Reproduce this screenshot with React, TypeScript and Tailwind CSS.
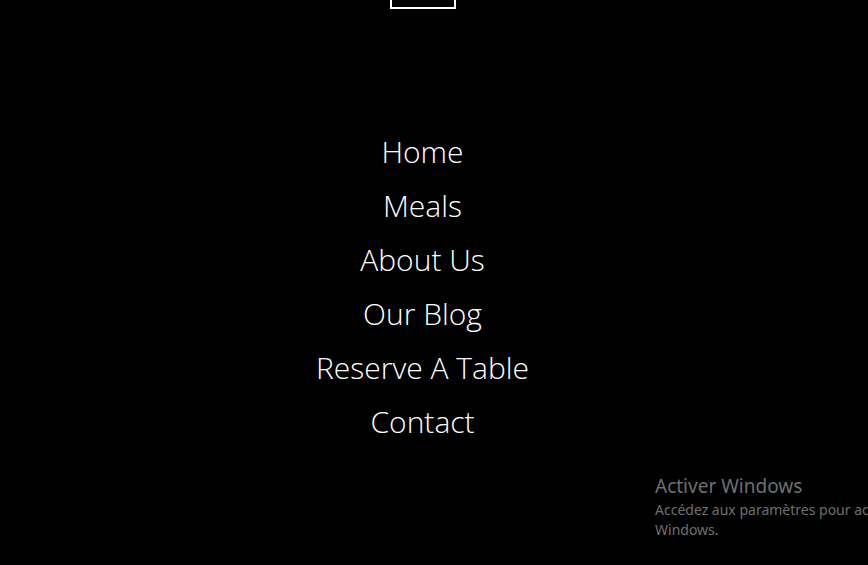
const links = ["Home", "Meals", "About Us", "Our Blog", "Reserve A Table", "Contact"];

export default function App() {
  return (
    <div className="relative h-[565px] w-[868px] overflow-hidden bg-black">
      {/* menu column */}
      <div className="flex w-[845px] flex-col items-center">
        <div className="h-[9px] w-[66px] border-2 border-t-0 border-white" />
        <ul
          className="mt-[116px] flex flex-col items-center font-light text-white"
          style={{ fontFamily: '"Open Sans", sans-serif' }}
        >
          {links.map((l) => (
            <li key={l} className="text-[30px] leading-[54px]">
              <a href="#">{l}</a>
            </li>
          ))}
        </ul>
      </div>

      {/* windows watermark */}
      <div
        className="absolute left-[655px] top-[474px] whitespace-nowrap text-[#6f6f6f]"
        style={{ fontFamily: '"Noto Sans", sans-serif' }}
      >
        <p className="text-[19px] leading-[25px]">Activer Windows</p>
        <p className="text-[14px] leading-[21px]">Accédez aux paramètres pour activer</p>
        <p className="text-[14px] leading-[19px]">Windows.</p>
      </div>
    </div>
  );
}
